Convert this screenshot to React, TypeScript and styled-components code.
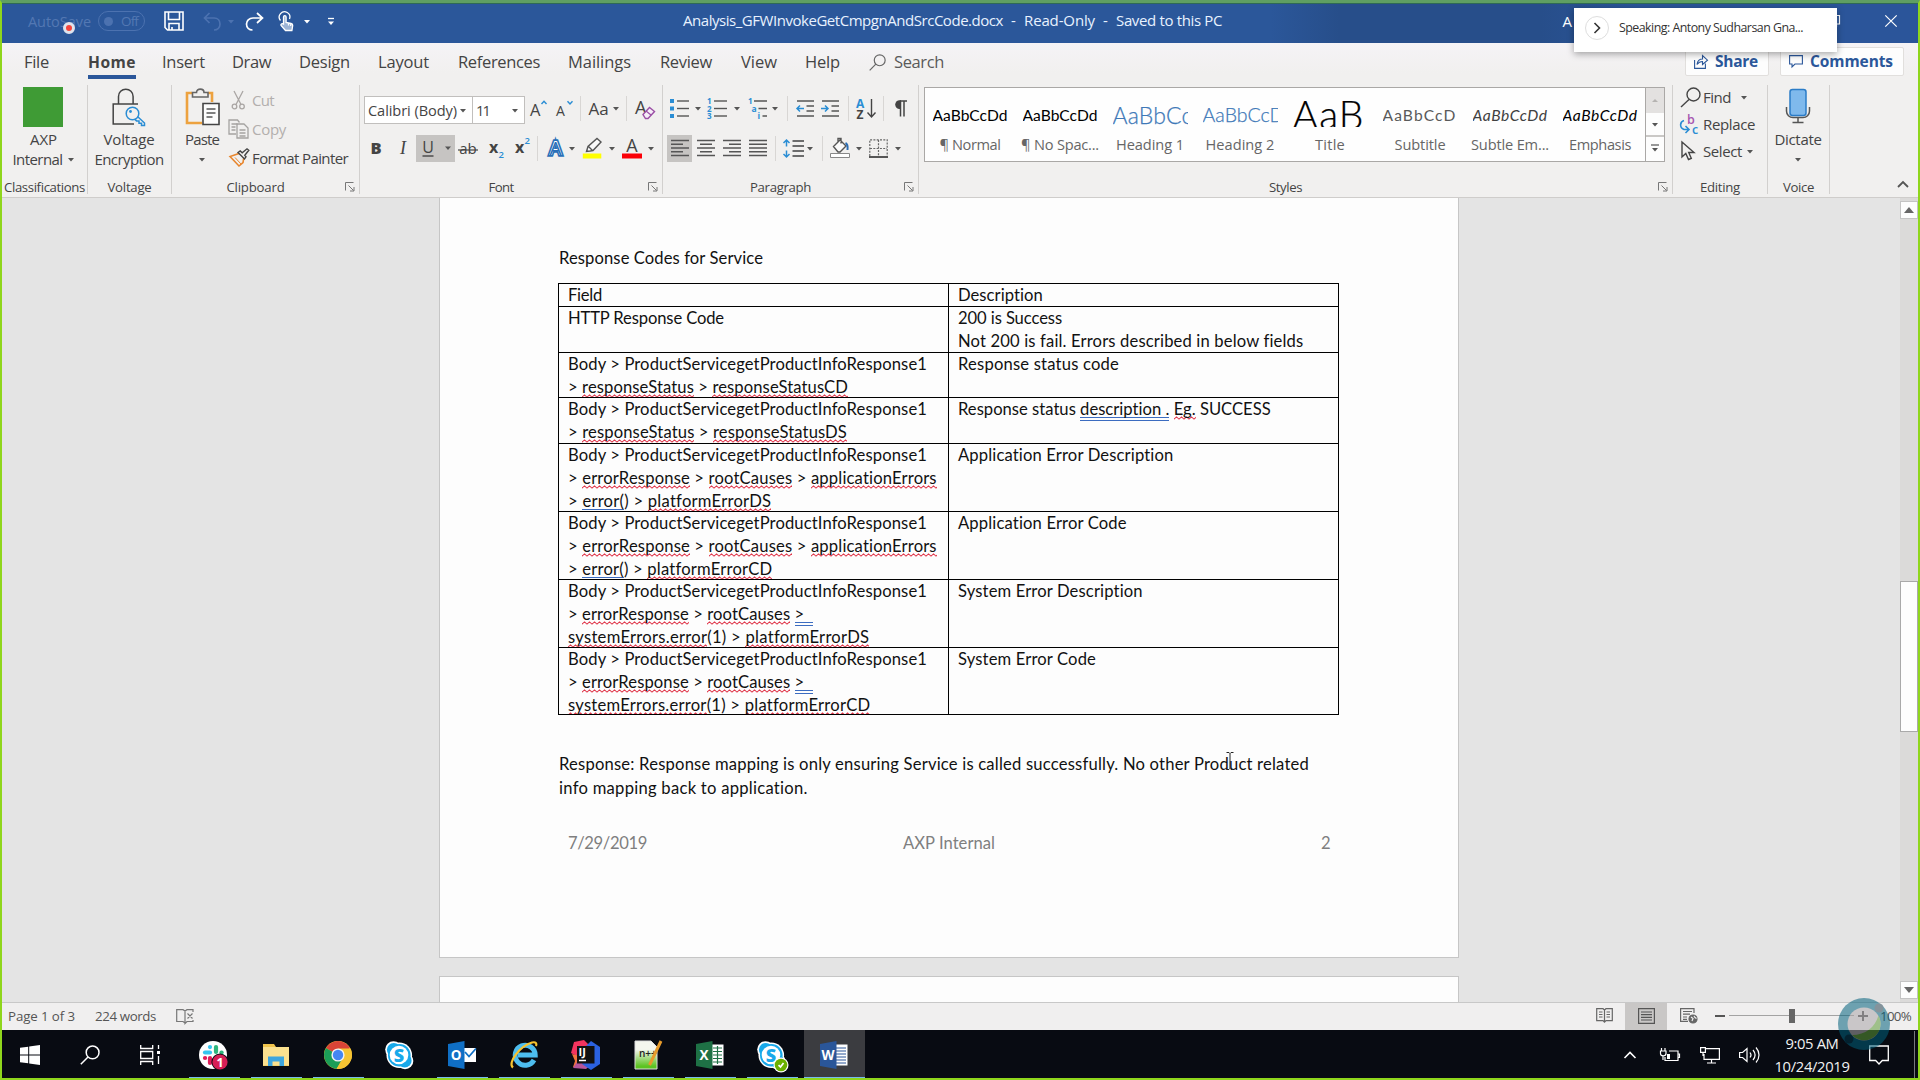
import React, { useLayoutEffect, useRef, useState } from "react";
import styled, { createGlobalStyle, css } from "styled-components";

const ui = `"Open Sans", "Noto Sans", "Liberation Sans", sans-serif`;
const doc = `Lato, "Open Sans", "Liberation Sans", sans-serif`;

const Global = createGlobalStyle`
  * { box-sizing: border-box; }
  html, body { margin: 0; padding: 0; background: #e4e4e4; overflow: hidden; }
  svg { display: block; flex: none; overflow: visible; }
`;

/* ---------- text that is tracked to a given width ---------- */
const FitSpan = styled.span`
  display: inline-block;
  flex: none;
  white-space: pre;
`;

function Fit({ w, children }: { w: number; children: React.ReactNode }) {
  const ref = useRef<HTMLSpanElement>(null);
  const [spacing, setSpacing] = useState<number | null>(null);
  useLayoutEffect(() => {
    const el = ref.current;
    if (!el || spacing !== null) return;
    const n = (el.textContent || "").length;
    if (n) setSpacing((w - el.getBoundingClientRect().width) / n);
  }, [w, spacing]);
  return (
    <FitSpan ref={ref} style={{ letterSpacing: spacing === null ? undefined : `${spacing}px` }}>
      {children}
    </FitSpan>
  );
}

/* ---------- shell ---------- */
const Screen = styled.div`
  position: relative;
  display: flex;
  flex-direction: column;
  width: 1920px;
  height: 1080px;
  padding-top: 4px;
  overflow: hidden;
  background: #e4e4e4;
  font-family: ${ui};
  color: #444;
`;

const Frame = styled.div`
  position: absolute;
  inset: 0;
  pointer-events: none;
  border: 2px solid #8fd61c;
  border-top: 3px solid #5f9f62;
  box-shadow: inset 0 1px 0 #2f6a55;
`;

/* ---------- title bar ---------- */
const TitleBar = styled.div`
  flex: none;
  display: flex;
  align-items: center;
  height: 39px;
  padding: 0 23px 5px 28px;
  background: linear-gradient(90deg, #2b579a 0 1270px, #274e8a 1340px 1540px, #2b559a 1640px);
  color: #fff;
  font-size: 15px;
`;

const Faint = styled.div`
  display: flex;
  align-items: center;
  color: #5378b3;
  font-size: 14.5px;
`;

const Toggle = styled.div`
  display: flex;
  align-items: center;
  width: 47px;
  height: 20px;
  margin-left: 7px;
  padding: 0 6px 0 5px;
  justify-content: space-between;
  border: 1px solid #4c72b0;
  border-radius: 10px;
  font-size: 13.5px;
`;
const Knob = styled.div`
  width: 9px;
  height: 9px;
  border-radius: 50%;
  background: #4c72b0;
`;

const Slot = styled.div<{ $w?: number; $ml?: number; $on?: boolean; $drop?: number }>`
  flex: none;
  display: flex;
  align-items: center;
  justify-content: center;
  width: ${(p) => (p.$w ? `${p.$w}px` : "auto")};
  height: 27px;
  margin-left: ${(p) => p.$ml || 0}px;
  margin-top: ${(p) => p.$drop || 0}px;
  ${(p) => p.$on && css`background: #c6c4c2;`}
`;

const DocTitle = styled.div`
  display: flex;
  width: 887px;
  margin-left: 348px;
  padding-bottom: 3px;
  color: #e8f2ff;
`;
const Dash = styled.span`
  width: 21px;
  text-align: center;
`;

/* ---------- tabs ---------- */
const Tabs = styled.div`
  flex: none;
  display: flex;
  height: 42px;
  background: linear-gradient(#f5f3f6, #f1f0ef 30px);
  padding-left: 24px;
  font-size: 16.5px;
`;
const Tab = styled.div<{ $w: number; $active?: boolean }>`
  flex: none;
  width: ${(p) => p.$w}px;
  padding-top: 7px;
  line-height: 24px;
  ${(p) =>
    p.$active &&
    css`
      font-weight: 700;
      font-size: 15.6px;
    `}
`;
const Underline = styled.div`
  width: 48px;
  height: 4px;
  margin-top: 1px;
  background: #2b579a;
`;
const SearchBox = styled.div`
  display: flex;
  width: 816px;
  padding-top: 7px;
  line-height: 24px;
  gap: 8px;
  color: #5a5a5a;
  svg { margin-top: 4px; }
`;
const PillButton = styled.div<{ $w: number; $mr?: number }>`
  flex: none;
  display: flex;
  align-items: center;
  gap: 7px;
  width: ${(p) => p.$w}px;
  height: 29px;
  margin: 4px ${(p) => p.$mr || 0}px 0 0;
  padding: 0 0 1px 8px;
  background: #fdfdfd;
  border: 1px solid #e1dfdd;
  border-radius: 2px;
  color: #2b579a;
  font-weight: 700;
  font-size: 15.5px;
`;

/* ---------- ribbon ---------- */
const Ribbon = styled.div`
  flex: none;
  display: flex;
  height: 113px;
  padding-left: 2px;
  background: #f1f0ef;
  border-bottom: 1px solid #cfcdcb;
`;
const Group = styled.div<{ $w: number }>`
  flex: none;
  display: flex;
  flex-direction: column;
  width: ${(p) => p.$w}px;
  height: 109px;
  border-right: 1px solid #d2d0ce;
`;
const GroupBody = styled.div<{ $pt?: number }>`
  flex: 1;
  display: flex;
  padding-top: ${(p) => p.$pt || 0}px;
`;
const GroupFoot = styled.div`
  flex: none;
  display: flex;
  align-items: center;
  height: 20px;
  margin-bottom: -3px;
  font-size: 13.2px;
`;
const FootLabel = styled.div`
  flex: 1;
  display: flex;
  justify-content: center;
`;
const LauncherBox = styled.div`
  width: 20px;
  padding-left: 6px;
`;
const Rows = styled.div<{ $gap?: number; $up?: number }>`
  display: flex;
  flex-direction: column;
  gap: ${(p) => p.$gap ?? 13}px;
  margin-top: ${(p) => -(p.$up || 0)}px;
`;
const Row = styled.div<{ $h?: number }>`
  display: flex;
  align-items: center;
  height: ${(p) => p.$h || 25}px;
`;
const BigButton = styled.div<{ $w: number; $pt?: number; $ml?: number }>`
  flex: none;
  display: flex;
  flex-direction: column;
  align-items: center;
  width: ${(p) => p.$w}px;
  margin-left: ${(p) => p.$ml || 0}px;
  padding-top: ${(p) => p.$pt ?? 2}px;
  font-size: 15px;
  line-height: 20px;
`;
const BigIcon = styled.div`
  display: flex;
  justify-content: center;
  height: 42px;
`;
const CaretLine = styled.div`
  display: flex;
  align-items: center;
  gap: 4px;
  height: 20px;
`;
const GreenSquare = styled.div`
  width: 40px;
  height: 40px;
  margin-right: 1px;
  background: #3f9b35;
`;
const SmallItem = styled.div<{ $off?: boolean; $h: number }>`
  display: flex;
  align-items: center;
  height: ${(p) => p.$h}px;
  font-size: 15px;
  color: ${(p) => (p.$off ? "#b3afad" : "#444")};
`;
const IconCell = styled.div<{ $w: number }>`
  flex: none;
  width: ${(p) => p.$w}px;
  display: flex;
`;
const Sep = styled.div<{ $ml?: number }>`
  flex: none;
  width: 1px;
  height: 25px;
  margin-left: ${(p) => p.$ml || 0}px;
  background: #d8d6d4;
`;
const Combo = styled.div<{ $w: number }>`
  flex: none;
  display: flex;
  align-items: center;
  justify-content: space-between;
  width: ${(p) => p.$w}px;
  height: 28px;
  margin-right: -1px;
  padding: 0 5px 0 3px;
  background: #fff;
  border: 1px solid #c1bfbd;
  font-size: 14.6px;
  & + & { margin-right: 1px; }
`;
const Glyph = styled.span<{ $size: number; $weight?: number; $italic?: boolean; $color?: string; $serif?: boolean }>`
  font-size: ${(p) => p.$size}px;
  font-weight: ${(p) => p.$weight || 400};
  font-style: ${(p) => (p.$italic ? "italic" : "normal")};
  font-family: ${(p) => (p.$serif ? `"Liberation Serif", serif` : ui)};
  color: ${(p) => p.$color || "#444"};
  line-height: 1;
`;

/* ---------- styles gallery ---------- */
const Gallery = styled.div`
  display: flex;
  width: 741px;
  height: 75px;
  margin: 2px 0 0 5px;
  background: #fefefe;
  border: 1px solid #aaa8a6;
`;
const StyleCell = styled.div`
  flex: none;
  width: 90px;
  display: flex;
  flex-direction: column;
  align-items: center;
  font-size: 14.6px;
  color: #666;
`;
const Sample = styled.div<{ $size: number; $color?: string; $italic?: boolean; $light?: boolean }>`
  display: flex;
  align-items: flex-end;
  width: 75px;
  height: 30px;
  margin-top: 9px;
  overflow: hidden;
  white-space: pre;
  font-family: ${doc};
  font-size: ${(p) => p.$size}px;
  line-height: 20px;
  padding-bottom: ${(p) => (p.$size > 30 ? 3 : 2)}px;
  color: ${(p) => p.$color || "#000"};
  font-style: ${(p) => (p.$italic ? "italic" : "normal")};
  font-weight: ${(p) => (p.$light ? 300 : 400)};
  -webkit-text-stroke: ${(p) => (p.$light ? `0.25px ${p.$color || "#000"}` : "0")};
`;
const StyleName = styled.div`
  line-height: 22px;
  margin-top: 6px;
`;
const GalleryScroll = styled.div`
  display: flex;
  flex-direction: column;
  width: 19px;
  border-left: 1px solid #aaa8a6;
`;
const GalleryBtn = styled.div<{ $h: number; $off?: boolean }>`
  display: flex;
  align-items: center;
  justify-content: center;
  height: ${(p) => p.$h}px;
  background: ${(p) => (p.$off ? "#e3e1e0" : "#fdfdfd")};
  border-bottom: ${(p) => (p.$h === 24 ? "2px solid #cac8c6" : "none")};
`;
const Collapse = styled.div`
  flex: 1;
  display: flex;
  align-items: flex-end;
  justify-content: flex-end;
  padding: 0 11px 7px 0;
`;

/* ---------- document ---------- */
const Workspace = styled.div`
  flex: none;
  display: flex;
  height: 804px;
  padding-left: 439px;
  background: #e4e4e4;
`;
const Pages = styled.div`
  width: 1020px;
  display: flex;
  flex-direction: column;
  gap: 18px;
`;
const Page = styled.div<{ $h: number; $first?: boolean }>`
  flex: none;
  height: ${(p) => p.$h}px;
  padding: 48px 0 0 119px;
  background: #fdfdfd;
  border: 1px solid #c6c6c6;
  ${(p) => p.$first && css`border-top: none;`}
  font-family: ${doc};
  font-size: 16.6px;
  color: #111;
`;
const Para = styled.div<{ $h: number }>`
  height: ${(p) => p.$h}px;
  line-height: ${(p) => p.$h}px;
`;
const Table = styled.div`
  display: flex;
  flex-direction: column;
  width: 781px;
  margin: 13px 0 0 -1px;
  border: 1px solid #000;
  border-bottom: none;
`;
const TRow = styled.div<{ $h: number }>`
  display: grid;
  grid-template-columns: 389px 1fr;
  height: ${(p) => p.$h}px;
  border-bottom: 1px solid #000;
`;
const Cell = styled.div`
  padding-left: 9px;
  line-height: 22.8px;
  overflow: hidden;
  & + & { border-left: 1px solid #000; }
`;
const Line = styled.div`
  height: 22.8px;
`;
const Squiggle = styled.span`
  background: url("data:image/svg+xml,%3Csvg xmlns='http://www.w3.org/2000/svg' width='5' height='4'%3E%3Cpath d='M-1.250 .9L0 3.1L2.500 .9L5 3.1L6.250 2' fill='none' stroke='%23e0364a' stroke-width='1.050'/%3E%3C/svg%3E")
    repeat-x left bottom;
  padding-bottom: 1px;
`;
const Grammar = styled.span`
  background: linear-gradient(#3c6cc0 0 1px, transparent 1px 3px, #3c6cc0 3px 4px) no-repeat left bottom / 100% 4px;
  padding-bottom: 2px;
`;
const Footer = styled.div`
  display: grid;
  grid-template-columns: 335px 1fr auto;
  width: 762px;
  margin: 31px 0 0 9px;
  height: 24px;
  line-height: 24px;
  color: #7f7f7f;
`;
const Scrollbar = styled.div`
  display: flex;
  flex-direction: column;
  width: 18px;
  margin-left: 441px;
  padding: 3px 0 3px;
  background: #dbdad9;
`;
const ScrollBtn = styled.div`
  flex: none;
  display: flex;
  align-items: center;
  justify-content: center;
  height: 18px;
  background: #fdfdfd;
  border: 1px solid #c4c4c4;
`;
const ScrollTrack = styled.div`
  flex: 1;
  padding-top: 362px;
`;
const ScrollThumb = styled.div`
  height: 151px;
  background: #fdfdfd;
  border: 1px solid #a9a9a9;
`;
const TextCursor = styled.div`
  position: absolute;
  left: 1225px;
  top: 752px;
`;

/* ---------- status bar ---------- */
const StatusBar = styled.div`
  flex: none;
  display: flex;
  align-items: center;
  height: 28px;
  padding: 0 0 1px 8px;
  background: #f0efef;
  border-top: 1px solid #c8c8c8;
  font-size: 13.3px;
  color: #555;
`;
const View = styled.div<{ $w: number; $ml?: number; $on?: boolean }>`
  flex: none;
  display: flex;
  align-items: center;
  justify-content: center;
  width: ${(p) => p.$w}px;
  height: 27px;
  margin-left: ${(p) => p.$ml || 0}px;
  padding-bottom: 1px;
  box-shadow: ${(p) => (p.$on ? "0 1px 0 #c9c7c6" : "none")};
  background: ${(p) => (p.$on ? "#c9c7c6" : "transparent")};
`;
const Zoom = styled.div`
  display: flex;
  align-items: center;
  width: 125px;
  height: 14px;
  margin: 0 4px;
  padding-left: 60px;
  background: linear-gradient(#a3a3a3, #a3a3a3) no-repeat 0 6px / 100% 1px;
`;
const ZoomThumb = styled.div`
  width: 6px;
  height: 14px;
  background: #666;
`;

/* ---------- taskbar ---------- */
const Taskbar = styled.div`
  flex: none;
  display: flex;
  height: 50px;
  background: #080b12;
  color: #f2f2f2;
`;
const SysTile = styled.div`
  flex: none;
  display: flex;
  align-items: center;
  justify-content: center;
  width: 60px;
  height: 50px;
`;
const AppTiles = styled.div`
  display: flex;
  margin-left: 4px;
  width: 1436px;
`;
const AppTile = styled.div<{ $run?: boolean; $active?: boolean }>`
  flex: none;
  display: flex;
  align-items: center;
  justify-content: center;
  width: 61px;
  height: 48px;
  margin-right: 1px;
  padding: 2px 2px 0 0;
  background: ${(p) => (p.$active ? "#3b3c40" : "transparent")};
  ${(p) =>
    p.$run &&
    css`
      background-image: linear-gradient(#76b9ed, #76b9ed);
      background-repeat: no-repeat;
      background-position: center bottom;
      background-size: ${p.$active ? "61px" : "51px"} 1px;
    `}
`;
const Tray = styled.div`
  display: flex;
  align-items: center;
  height: 50px;
`;
const Clock = styled.div`
  display: flex;
  flex-direction: column;
  align-items: center;
  width: 76px;
  margin: 0 19px 0 14px;
  font-size: 14.8px;
  line-height: 23px;
`;
const DesktopEdge = styled.div`
  width: 1px;
  height: 48px;
  margin-left: 25px;
  background: #77797d;
`;

/* ---------- overlays ---------- */
const SpeakerCard = styled.div`
  position: absolute;
  left: 1574px;
  top: 8px;
  display: flex;
  align-items: center;
  gap: 10px;
  width: 263px;
  height: 44px;
  padding: 0 0 5px 11px;
  background: #fff;
  box-shadow: 0 2px 7px rgba(0, 0, 0, 0.35);
  color: #333;
  font-size: 12.4px;
  font-weight: 500;
`;
const RoundBtn = styled.div`
  display: flex;
  align-items: center;
  justify-content: center;
  width: 24px;
  height: 24px;
  border: 1px solid #dedede;
  border-radius: 50%;
`;
const RecordDot = styled.div`
  position: absolute;
  left: 63px;
  top: 22px;
  width: 12px;
  height: 12px;
  border: 3px solid #dfe3ec;
  border-radius: 50%;
  background: #f4443c;
`;
const Ball = styled.div`
  position: absolute;
  left: 1838px;
  top: 998px;
`;

/* ---------- icons ---------- */
const Caret = ({ c = "#555", s = 6 }: { c?: string; s?: number }) => (
  <svg width={8} height={5} viewBox="0 0 8 5">
    <path d={`M${4 - s / 2} 1h${s}l${-s / 2} 3.4z`} fill={c} />
  </svg>
);
const Launcher = () => (
  <LauncherBox>
    <svg width="10" height="10" viewBox="0 0 10 10" fill="none" stroke="#777">
      <path d="M.5 8.5v-8h8M3.5 3.5l5 5M9 5v4H5" />
    </svg>
  </LauncherBox>
);
const Foot = ({ w, label, launch }: { w: number; label: string; launch?: boolean }) => (
  <GroupFoot>
    <FootLabel>
      <Fit w={w}>{label}</Fit>
    </FootLabel>
    {launch && <Launcher />}
  </GroupFoot>
);
const lines = (rows: [number, number][], c = "#555") =>
  rows.map(([a, b], i) => <path key={i} d={`M${a} ${1 + i * 5}H${b}`} stroke={c} strokeWidth="1.7" />);

const AlignIcon = ({ rows }: { rows: [number, number][] }) => (
  <svg width="18" height="18" viewBox="0 0 18 18">
    {rows.map(([a, b], i) => (
      <path key={i} d={`M${a} ${1.5 + i * 3.75}H${b}`} stroke="#555" strokeWidth="1.5" />
    ))}
  </svg>
);
const SvgText = styled.text`
  font-family: ${ui};
`;
const Magnifier = ({ s = 19, c = "#555", w = 1.4 }: { s?: number; c?: string; w?: number }) => (
  <svg width={s} height={s} viewBox="0 0 20 20" fill="none" stroke={c} strokeWidth={w}>
    <circle cx="12.6" cy="7.4" r="6.4" />
    <path d="M8 12L.8 19.2" />
  </svg>
);
const OfficeIcon = ({ letter, dark, kind }: { letter: string; dark: string; kind: "mail" | "grid" | "lines" }) => (
  <svg width="28" height="28" viewBox="0 0 28 28">
    {kind !== "mail" && <rect x="14" y="3.5" width="13.500" height="21" fill="#fff" />}
    {kind === "mail" && (
      <>
        <rect x="16" y="7" width="12" height="14" fill="#fff" />
        <path d="M17 11l4 4.500 7-8" fill="none" stroke={dark} strokeWidth="1.8" />
      </>
    )}
    {kind === "grid" && (
      <path d="M17 7h9M17 10.500h9M17 14h9M17 17.500h9M17 21h9M21.500 5v18" stroke={dark} strokeWidth="1.2" />
    )}
    {kind === "lines" && (
      <path d="M16 7h10M16 10h10M16 13h10M16 16h10M16 19h10M16 22h10" stroke={dark} strokeWidth="1.200" />
    )}
    <path d="M0 3L16.500 0v28L0 25z" fill={dark} />
    <SvgText x="8" y="19" fontSize="13.500" fontWeight="700" fill="#fff" textAnchor="middle">
      {letter}
    </SvgText>
  </svg>
);
const SkypeIcon = ({ badge }: { badge?: boolean }) => (
  <svg width="29" height="29" viewBox="0 0 29 29">
    <circle cx="8.500" cy="8.500" r="8.300" fill="#fff" />
    <circle cx="20" cy="20" r="8.300" fill="#fff" />
    <circle cx="14.300" cy="14.300" r="12.800" fill="#fff" />
    <circle cx="8.800" cy="8.800" r="6.900" fill="#18a9ea" />
    <circle cx="19.700" cy="19.700" r="6.900" fill="#18a9ea" />
    <circle cx="14.300" cy="14.300" r="11.300" fill="#18a9ea" />
    <circle cx="14" cy="14" r="9.300" fill="#fff" />
    <SvgText x="14" y="20.500" fontSize="18" fontWeight="800" fill="#18a9ea" textAnchor="middle">
      S
    </SvgText>
    {badge && (
      <>
        <circle cx="24" cy="24" r="7.500" fill="#fff" />
        <circle cx="24" cy="24" r="6.300" fill="#6bb100" />
        <path d="M21.500 24.200l2 1.800 3-4" fill="none" stroke="#fff" strokeWidth="1.700" />
      </>
    )}
  </svg>
);

/* ---------- document content ---------- */
const S = Squiggle;
const G = Grammar;
const bodyLine: [number, React.ReactNode] = [359, "Body > ProductServicegetProductInfoResponse1"];
const appErrors: [number, React.ReactNode] = [
  369,
  <>{"> "}<S>errorResponse</S>{" > "}<S>rootCauses</S>{" > "}<S>applicationErrors</S></>,
];
const sysErrors: [number, React.ReactNode] = [
  245,
  <>{"> "}<S>errorResponse</S>{" > "}<S>rootCauses</S> <G>{">  "}</G></>,
];
type Lines = [number, React.ReactNode][];
const tableRows: { h: number; left: Lines; right: Lines }[] = [
  { h: 23, left: [[34, "Field"]], right: [[85, "Description"]] },
  {
    h: 46,
    left: [[156, "HTTP Response Code"]],
    right: [[104, "200 is Success"], [345, "Not 200 is fail. Errors described in below fields"]],
  },
  {
    h: 45,
    left: [bodyLine, [280, <>{"> "}<S>responseStatus</S>{" > "}<S>responseStatusCD</S></>]],
    right: [[161, "Response status code"]],
  },
  {
    h: 46,
    left: [bodyLine, [279, <>{"> "}<S>responseStatus</S>{" > "}<S>responseStatusDS</S></>]],
    right: [[313, <>Response status <G>description .</G> <S>Eg.</S> SUCCESS</>]],
  },
  {
    h: 68,
    left: [bodyLine, appErrors, [203, <>{"> "}<G>error(</G>{") > "}<S>platformErrorDS</S></>]],
    right: [[216, "Application Error Description"]],
  },
  {
    h: 68,
    left: [bodyLine, appErrors, [204, <>{"> "}<G>error(</G>{") > "}<S>platformErrorCD</S></>]],
    right: [[169, "Application Error Code"]],
  },
  {
    h: 68,
    left: [bodyLine, sysErrors, [301, <><S>systemErrors.error</S>{"(1) > "}<S>platformErrorDS</S></>]],
    right: [[185, "System Error Description"]],
  },
  {
    h: 67,
    left: [bodyLine, sysErrors, [302, <><S>systemErrors.error</S>{"(1) > "}<S>platformErrorCD</S></>]],
    right: [[138, "System Error Code"]],
  },
];

const tabs: [string, number, number][] = [
  ["File", 64, 25],
  ["Home", 74, 48],
  ["Insert", 70, 43],
  ["Draw", 67, 39],
  ["Design", 79, 51],
  ["Layout", 80, 51],
  ["References", 110, 82],
  ["Mailings", 92, 63],
  ["Review", 81, 52],
  ["View", 64, 36],
  ["Help", 64, 35],
];

const styleItems = [
  { s: "AaBbCcDd", w: 75, size: 15.6, name: "¶ Normal", nw: 61 },
  { s: "AaBbCcDd", w: 75, size: 15.6, name: "¶ No Spac...", nw: 78 },
  { s: "AaBbCc", w: 80, size: 23, name: "Heading 1", nw: 68, color: "#3f79b8", light: true },
  { s: "AaBbCcD", w: 82, size: 19.5, name: "Heading 2", nw: 69, color: "#3f79b8", light: true },
  { s: "AaB", w: 72, size: 39, name: "Title", nw: 30, light: true },
  { s: "AaBbCcD", w: 74, size: 15.6, name: "Subtitle", nw: 51, color: "#5a5a5a" },
  { s: "AaBbCcDd", w: 75, size: 15.6, name: "Subtle Em...", nw: 78, color: "#404040", italic: true },
  { s: "AaBbCcDd", w: 75, size: 15.6, name: "Emphasis", nw: 62, italic: true },
];

export default function App() {
  return (
    <Screen>
      <Global />
      <TitleBar>
        <Faint>
          <Fit w={63}>AutoSave</Fit>
          <Toggle>
            <Knob />
            <Fit w={17}>Off</Fit>
          </Toggle>
        </Faint>
        <Slot $w={20} $ml={19}>
          <svg width="20" height="20" viewBox="0 0 20 20" fill="none" stroke="#fff" strokeWidth="1.6">
            <path d="M1 1h18v18H3.500L1 16.500zM4.500 1v7.500h11V1M5 19v-6.500h10V19M8 19v-3" />
          </svg>
        </Slot>
        <Slot $w={18} $ml={19}>
          <svg width="18" height="19" viewBox="0 0 18 19" fill="none" stroke="#4c72b0" strokeWidth="1.7">
            <path d="M6.500 1L1.500 6l5 5M1.500 6H11c4 0 6 3 6 6 0 3.500-2.500 6-6 6" />
          </svg>
        </Slot>
        <Slot $w={8} $ml={6}><Caret c="#4c72b0" /></Slot>
        <Slot $w={19} $ml={10}>
          <svg width="19" height="19" viewBox="0 0 19 19" fill="none" stroke="#fff" strokeWidth="1.7">
            <path d="M12 1l5.500 5-5.500 5M17.500 6H8C4 6 1.500 9 1.500 12c0 3.500 2.500 6 6 6" />
          </svg>
        </Slot>
        <Slot $w={16} $ml={14}>
          <svg width="16" height="21" viewBox="0 0 16 21" fill="none" stroke="#fff" strokeWidth="1.3">
            <path d="M2.500 9.500A5.300 5.300 0 1 1 11.500 8" />
            <path d="M5.500 13V6c0-1.800 2.600-1.800 2.600 0v5.500l5 1c1.200.3 1.700 1 1.600 2l-.8 5H7.500L3 14.500c-.6-1.400 1.300-2.300 2.500-1.500zM10.500 12v2.500M12.700 12.500V15" fill="#9db4d6" />
          </svg>
        </Slot>
        <Slot $w={8} $ml={9}><Caret c="#fff" /></Slot>
        <Slot $w={8} $ml={16}>
          <svg width="8" height="9" viewBox="0 0 8 9">
            <path d="M1 1.500h6" stroke="#fff" strokeWidth="1.300" />
            <path d="M1 4.500h6L4 8z" fill="#fff" />
          </svg>
        </Slot>
        <DocTitle>
          <Fit w={320}>Analysis_GFWInvokeGetCmpgnAndSrcCode.docx</Fit>
          <Dash>-</Dash>
          <Fit w={71}>Read-Only</Fit>
          <Dash>-</Dash>
          <Fit w={106}>Saved to this PC</Fit>
        </DocTitle>
        <Slot>A</Slot>
        <Slot $w={12} $ml={256}>
          <svg width="12" height="12" viewBox="0 0 12 12" fill="none" stroke="#fff" strokeWidth="1.2">
            <path d="M.5 3h8v8.500h-8zM3 3V.5h8.500V9H8.500" />
          </svg>
        </Slot>
        <Slot $w={12} $ml={45}>
          <svg width="12" height="12" viewBox="0 0 12 12" stroke="#fff" strokeWidth="1.2">
            <path d="M.3.3l11.400 11.400M11.700.3L.3 11.700" />
          </svg>
        </Slot>
      </TitleBar>

      <Tabs>
        {tabs.map(([t, w, tw]) => (
          <Tab key={t} $w={w} $active={t === "Home"}>
            <Fit w={tw}>{t}</Fit>
            {t === "Home" && <Underline />}
          </Tab>
        ))}
        <SearchBox>
          <Magnifier s={17} c="#666" />
          <Fit w={50}>Search</Fit>
        </SearchBox>
        <PillButton $w={84} $mr={11}>
          <svg width="14" height="15" viewBox="0 0 14 15" fill="none" stroke="#2b579a" strokeWidth="1.1">
            <path d="M.6 6v8.400h10.800V9.500M3 10.500c.5-3.500 2.500-5.500 5.500-5.500V1.500l5 4.700-5 4.300V7.500C6 7.500 4.500 8.500 3 10.500z" />
          </svg>
          <Fit w={43}>Share</Fit>
        </PillButton>
        <PillButton $w={124}>
          <svg width="14" height="13" viewBox="0 0 14 13" fill="none" stroke="#2b579a" strokeWidth="1.1">
            <path d="M.6.600h12.800v8.400H6l-3 3V9H.600z" />
          </svg>
          <Fit w={83}>Comments</Fit>
        </PillButton>
      </Tabs>

      <Ribbon>
        <Group $w={86}>
          <GroupBody>
            <BigButton $w={83}>
              <BigIcon><GreenSquare /></BigIcon>
              <Fit w={27}>AXP</Fit>
              <CaretLine>
                <Fit w={50}>Internal</Fit>
                <Caret />
              </CaretLine>
            </BigButton>
          </GroupBody>
          <Foot w={81} label="Classifications" />
        </Group>

        <Group $w={84}>
          <GroupBody>
            <BigButton $w={82}>
              <BigIcon>
                <svg width="34" height="40" viewBox="0 0 34 40" fill="none" strokeWidth="1.500">
                  <path d="M26 17H1.200v20H22M6.500 17V9.500a7.300 7.300 0 0 1 14.600 0V17" stroke="#444" />
                  <circle cx="20.500" cy="26.500" r="6.300" stroke="#2a8dd4" fill="#f1f0ef" />
                  <circle cx="18.500" cy="24.500" r="1.400" fill="#2a8dd4" />
                  <path d="M25.500 29.500l7 6.500v2.500h-3v-2.300h-2.500v-2.300h-2.500l-2-2" stroke="#2a8dd4" />
                </svg>
              </BigIcon>
              <Fit w={51}>Voltage</Fit>
              <Fit w={69}>Encryption</Fit>
            </BigButton>
          </GroupBody>
          <Foot w={44} label="Voltage" />
        </Group>

        <Group $w={188}>
          <GroupBody>
            <BigButton $w={36} $ml={12}>
              <BigIcon>
                <svg width="36" height="40" viewBox="0 0 36 40" fill="none">
                  <path d="M8 6H3v30h15M24 6h4v9" stroke="#eda23f" strokeWidth="2.600" />
                  <path d="M8.500 10V5.500h4C12.500 1 20 1 20 5.500h4V10z" stroke="#666" strokeWidth="1.600" fill="#f1f0ef" />
                  <path d="M19 16.500h16v21H19z" stroke="#444" strokeWidth="1.600" fill="#fcfcfc" />
                  <path d="M22.500 22h9M22.500 26h9M22.500 30h6" stroke="#555" strokeWidth="1.300" />
                </svg>
              </BigIcon>
              <Fit w={34}>Paste</Fit>
              <CaretLine><Caret /></CaretLine>
            </BigButton>
            <Rows $gap={0} $up={1}>
              <SmallItem $h={31} $off>
                <IconCell $w={32}>
                  <svg width="29" height="20" viewBox="0 0 29 20" fill="none" stroke="#aaa6a4" strokeWidth="1.300">
                    <g transform="translate(11 0)">
                      <path d="M3 1l7 13.500M12 1L5 14.500" />
                      <circle cx="3.500" cy="16.500" r="2.300" />
                      <circle cx="11" cy="16.500" r="2.300" />
                    </g>
                  </svg>
                </IconCell>
                <Fit w={22}>Cut</Fit>
              </SmallItem>
              <SmallItem $h={28} $off>
                <IconCell $w={32}>
                  <svg width="30" height="20" viewBox="0 0 30 20" fill="none" stroke="#a5a3a1" strokeWidth="1.300">
                    <g transform="translate(8 0)">
                      <path d="M8 15H1V1h8.500l2 2.500M3.500 5h6M3.500 8h4M3.500 11h4" />
                      <path d="M9 5h7l4 4v10H9zM11.500 11h6M11.500 14h6M11.500 17h6" />
                    </g>
                  </svg>
                </IconCell>
                <Fit w={34}>Copy</Fit>
              </SmallItem>
              <SmallItem $h={29}>
                <IconCell $w={32}>
                  <svg width="30" height="20" viewBox="0 0 30 20" fill="none">
                    <g transform="translate(9 0)">
                      <path d="M1 8.500l9 9.500 4-3.500 1-6.500-3.500-3z" stroke="#e8862e" strokeWidth="1.600" />
                      <path d="M6 9.500l6 6.500" stroke="#e8862e" />
                      <path d="M9 4.500l6.500 6.500 1.500-2.200-1.200-1.500 4-5L18 .8l-4.800 4-2-1.800z" stroke="#444" strokeWidth="1.400" fill="#f1f0ef" />
                    </g>
                  </svg>
                </IconCell>
                <Fit w={96}>Format Painter</Fit>
              </SmallItem>
            </Rows>
          </GroupBody>
          <Foot w={58} label="Clipboard" launch />
        </Group>

        <Group $w={303}>
          <GroupBody $pt={11}>
            <Rows>
              <Row>
                <Slot $ml={4} $drop={3}>
                  <Combo $w={109}><Fit w={89}>Calibri (Body)</Fit><Caret /></Combo>
                  <Combo $w={53}><Fit w={13}>11</Fit><Caret /></Combo>
                </Slot>
                <Slot $w={18} $ml={4}>
                  <svg width="18" height="18" viewBox="0 0 18 18" fill="none">
                    <SvgText x="0" y="15.500" fontSize="16.500" fill="#444">A</SvgText>
                    <path d="M11.500 4L14 1.200 16.500 4" stroke="#2a8dd4" strokeWidth="1.400" />
                  </svg>
                </Slot>
                <Slot $w={18} $ml={8}>
                  <svg width="18" height="18" viewBox="0 0 18 18" fill="none">
                    <SvgText x="0" y="15.500" fontSize="14" fill="#444">A</SvgText>
                    <path d="M11.500 1.200L14 4l2.500-2.800" stroke="#2a8dd4" strokeWidth="1.400" />
                  </svg>
                </Slot>
                <Sep $ml={6} />
                <Slot $w={21} $ml={7}><Glyph $size={17}>Aa</Glyph></Slot>
                <Slot $w={8} $ml={3}><Caret /></Slot>
                <Sep $ml={6} />
                <Slot $w={22} $ml={7}>
                  <svg width="22" height="22" viewBox="0 0 22 22" fill="none">
                    <SvgText x="1" y="16" fontSize="18" fill="#444">A</SvgText>
                    <path d="M9 16.500l6.500-7 5 4-6.500 7h-2.500z" fill="#f6eef8" stroke="#9b4fa5" strokeWidth="1.400" />
                    <path d="M12 13l5 4" stroke="#9b4fa5" strokeWidth="1.300" />
                  </svg>
                </Slot>
              </Row>
              <Row $h={28}>
                <Slot $w={12} $ml={10}><Glyph $size={16.5} $weight={800}>B</Glyph></Slot>
                <Slot $w={14} $ml={14}><Glyph $size={18} $italic $serif>I</Glyph></Slot>
                <Slot $w={39} $ml={6} $on>
                  <svg width="30" height="20" viewBox="0 0 30 20">
                    <SvgText x="7" y="15" fontSize="16" fill="#444" textAnchor="middle">U</SvgText>
                    <path d="M1.500 18h11" stroke="#444" strokeWidth="1.400" />
                    <path d="M24 8.500h6l-3 3.400z" fill="#555" />
                  </svg>
                </Slot>
                <Slot $w={20} $ml={3}>
                  <svg width="20" height="20" viewBox="0 0 20 20">
                    <SvgText x="10" y="16" fontSize="15" fill="#444" textAnchor="middle">ab</SvgText>
                    <path d="M0 12h20" stroke="#444" strokeWidth="1.200" />
                  </svg>
                </Slot>
                <Slot $w={16} $ml={11}>
                  <svg width="16" height="20" viewBox="0 0 16 20">
                    <SvgText x="0" y="14.500" fontSize="16" fontWeight="700" fill="#444">x</SvgText>
                    <SvgText x="9.500" y="19.500" fontSize="9.500" fontWeight="600" fill="#2a8dd4">2</SvgText>
                  </svg>
                </Slot>
                <Slot $w={16} $ml={10}>
                  <svg width="16" height="20" viewBox="0 0 16 20">
                    <SvgText x="0" y="14.500" fontSize="16" fontWeight="700" fill="#444">x</SvgText>
                    <SvgText x="9.500" y="6" fontSize="9.500" fontWeight="600" fill="#2a8dd4">2</SvgText>
                  </svg>
                </Slot>
                <Sep $ml={6} />
                <Slot $w={17} $ml={9}>
                  <svg width="17" height="20" viewBox="0 0 17 20">
                    <SvgText x="8.500" y="16.500" fontSize="19" fontWeight="600" fill="#fff" stroke="#2a6fb8" strokeWidth="3.400" paintOrder="stroke" textAnchor="middle">A</SvgText>
                    <SvgText x="8.500" y="16.500" fontSize="19" fontWeight="400" fill="#2a6fb8" textAnchor="middle">A</SvgText>
                  </svg>
                </Slot>
                <Slot $w={8} $ml={4}><Caret /></Slot>
                <Slot $w={21} $ml={6}>
                  <svg width="21" height="22" viewBox="0 0 21 22" fill="none">
                    <path d="M4.500 14.500l1.500-5L15 1.500l4 3.500-8 8.500-3 .5zM6.500 9.500l4 4" fill="#fafafa" stroke="#555" strokeWidth="1.400" />
                    <path d="M.8 16.500h18.500v5H.8z" fill="#ffff00" />
                  </svg>
                </Slot>
                <Slot $w={8} $ml={5}><Caret /></Slot>
                <Slot $w={21} $ml={6}>
                  <svg width="21" height="22" viewBox="0 0 21 22">
                    <SvgText x="10" y="14.500" fontSize="18" fill="#444" textAnchor="middle">A</SvgText>
                    <path d="M0 16.500h20v5H0z" fill="#fb0007" />
                  </svg>
                </Slot>
                <Slot $w={8} $ml={4}><Caret /></Slot>
              </Row>
            </Rows>
          </GroupBody>
          <Foot w={25} label="Font" launch />
        </Group>

        <Group $w={256}>
          <GroupBody $pt={11}>
            <Rows>
              <Row>
                <Slot $w={20} $ml={7}>
                  <svg width="20" height="20" viewBox="0 0 20 20">
                    {[2, 9.5, 17].map((y) => (
                      <g key={y}>
                        <rect x="0" y={y - 2} width="4" height="4" fill="#2a8dd4" />
                        <path d={`M7 ${y}H19`} stroke="#555" strokeWidth="1.400" />
                      </g>
                    ))}
                  </svg>
                </Slot>
                <Slot $w={8} $ml={4}><Caret /></Slot>
                <Slot $w={20} $ml={5}>
                  <svg width="20" height="20" viewBox="0 0 20 20">
                    {[2, 9.5, 17].map((y, i) => (
                      <g key={y}>
                        <SvgText x="0" y={y + 3} fontSize="8" fontWeight="700" fill="#2a8dd4">{i + 1}</SvgText>
                        <path d={`M7 ${y}H20`} stroke="#555" strokeWidth="1.400" />
                      </g>
                    ))}
                  </svg>
                </Slot>
                <Slot $w={8} $ml={6}><Caret /></Slot>
                <Slot $w={20} $ml={7}>
                  <svg width="20" height="20" viewBox="0 0 20 20">
                    <SvgText x="0" y="5" fontSize="8" fontWeight="700" fill="#2a8dd4">1</SvgText>
                    <SvgText x="3.500" y="12.500" fontSize="8.500" fontWeight="700" fill="#2a8dd4">a</SvgText>
                    <SvgText x="9.500" y="20" fontSize="8.500" fontWeight="700" fill="#2a8dd4">i</SvgText>
                    <path d="M6 2h13M10.500 9.500H19M14.500 17H19" stroke="#555" strokeWidth="1.400" />
                  </svg>
                </Slot>
                <Slot $w={8} $ml={3}><Caret /></Slot>
                <Sep $ml={8} />
                <Slot $w={19} $ml={8}>
                  <svg width="19" height="17" viewBox="0 0 19 17" fill="none">
                    <path d="M1 1h17M10.500 6H18M10.500 11H18M1 16h17" stroke="#555" strokeWidth="1.400" />
                    <path d="M1 8.500h7M4 5.500l-3 3 3 3" stroke="#2a8dd4" strokeWidth="1.500" />
                  </svg>
                </Slot>
                <Slot $w={19} $ml={6}>
                  <svg width="19" height="17" viewBox="0 0 19 17" fill="none">
                    <path d="M1 1h17M10.500 6H18M10.500 11H18M1 16h17" stroke="#555" strokeWidth="1.400" />
                    <path d="M0 8.500h7M4 5.500l3 3-3 3" stroke="#2a8dd4" strokeWidth="1.500" />
                  </svg>
                </Slot>
                <Sep $ml={8} />
                <Slot $w={21} $ml={7}>
                  <svg width="21" height="21" viewBox="0 0 21 21" fill="none">
                    <SvgText x="0" y="9.500" fontSize="12" fontWeight="700" fill="#2a8dd4">A</SvgText>
                    <SvgText x=".5" y="20.500" fontSize="12" fontWeight="700" fill="#444">Z</SvgText>
                    <path d="M15.500 1v18M11.500 14.500l4 4.500 4-4.500" stroke="#444" strokeWidth="1.400" />
                  </svg>
                </Slot>
                <Sep $ml={6} />
                <Slot $w={14} $ml={10}>
                  <svg width="14" height="17" viewBox="0 0 14 17">
                    <path d="M6.500 16.500V1H13M10 1v15.500" fill="none" stroke="#444" strokeWidth="1.500" />
                    <path d="M7 .3H5.500a4.200 4.200 0 0 0 0 8.600H7z" fill="#444" />
                  </svg>
                </Slot>
              </Row>
              <Row $h={28}>
                <Slot $w={25} $ml={4} $on><AlignIcon rows={[[0, 18], [0, 12], [0, 18], [0, 12], [0, 18]]} /></Slot>
                <Slot $w={18} $ml={5}><AlignIcon rows={[[0, 18], [3, 15], [0, 18], [3, 15], [0, 18]]} /></Slot>
                <Slot $w={18} $ml={8}><AlignIcon rows={[[0, 18], [6, 18], [0, 18], [6, 18], [0, 18]]} /></Slot>
                <Slot $w={18} $ml={8}><AlignIcon rows={[[0, 18], [0, 18], [0, 18], [0, 18], [0, 18]]} /></Slot>
                <Sep $ml={8} />
                <Slot $w={21} $ml={7}>
                  <svg width="21" height="19" viewBox="0 0 21 19" fill="none">
                    <g transform="translate(0 1)">{lines([[9.5, 21], [9.5, 21], [9.5, 21], [9.5, 21]])}</g>
                    <path d="M3.500 1v6.500M.5 4l3-3 3 3M3.500 11.500V18M.5 15l3 3 3-3" stroke="#2a8dd4" strokeWidth="1.500" />
                  </svg>
                </Slot>
                <Slot $w={8} $ml={2}><Caret /></Slot>
                <Sep $ml={8} />
                <Slot $w={20} $ml={7}>
                  <svg width="20" height="20" viewBox="0 0 20 20" fill="none">
                    <path d="M3.500 8.500L10 2l6 6-6 6H8zM8 4V.5h3v5" fill="#fafafa" stroke="#555" strokeWidth="1.400" />
                    <path d="M15.500 5c2 1 2.500 3 2 7" stroke="#2a6db4" strokeWidth="2" />
                    <path d="M.5 15.500h19v4H.5z" fill="#fff" stroke="#888" />
                  </svg>
                </Slot>
                <Slot $w={8} $ml={5}><Caret /></Slot>
                <Slot $w={19} $ml={6}>
                  <svg width="19" height="19" viewBox="0 0 19 19" fill="none" stroke="#666" strokeWidth="1.200">
                    <path d="M.8 17V.8h17.400V17M9.500 1v16M1 9.500h17" strokeDasharray="2 1.300" />
                    <path d="M0 18h19" stroke="#444" strokeWidth="1.800" />
                  </svg>
                </Slot>
                <Slot $w={8} $ml={6}><Caret /></Slot>
              </Row>
            </Rows>
          </GroupBody>
          <Foot w={61} label="Paragraph" launch />
        </Group>

        <Group $w={754}>
          <GroupBody>
            <Gallery>
              {styleItems.map((it) => (
                <StyleCell key={it.name}>
                  <Sample $size={it.size} $color={it.color} $italic={it.italic} $light={it.light}>
                    <Fit w={it.w}>{it.s}</Fit>
                  </Sample>
                  <StyleName><Fit w={it.nw}>{it.name}</Fit></StyleName>
                </StyleCell>
              ))}
              <GalleryScroll>
                <GalleryBtn $h={25} $off>
                  <svg width="8" height="5" viewBox="0 0 8 5"><path d="M1 4h6L4 1z" fill="#b5b3b1" /></svg>
                </GalleryBtn>
                <GalleryBtn $h={24}><Caret /></GalleryBtn>
                <GalleryBtn $h={23}>
                  <svg width="10" height="9" viewBox="0 0 10 9">
                    <path d="M1 1h8" stroke="#555" strokeWidth="1.200" />
                    <path d="M2 4h6L5 7.500z" fill="#555" />
                  </svg>
                </GalleryBtn>
              </GalleryScroll>
            </Gallery>
          </GroupBody>
          <Foot w={33} label="Styles" launch />
        </Group>

        <Group $w={95}>
          <GroupBody>
            <Rows $gap={0} $up={1}>
              <SmallItem $h={26}>
                <IconCell $w={30}>
                  <svg width="28" height="20" viewBox="0 0 28 20" fill="none" stroke="#444" strokeWidth="1.400">
                    <circle cx="20.500" cy="7.500" r="6.500" />
                    <path d="M16 12.500L8 20" />
                  </svg>
                </IconCell>
                <Fit w={28}>Find</Fit>
                <Slot $w={8} $ml={9}><Caret /></Slot>
              </SmallItem>
              <SmallItem $h={28}>
                <IconCell $w={30}>
                  <svg width="28" height="20" viewBox="0 0 28 20" fill="none">
                    <SvgText x="14" y="9.500" fontSize="12.500" fontWeight="600" fill="#a656b0">b</SvgText>
                    <SvgText x="19" y="19.500" fontSize="12.500" fontWeight="600" fill="#2a8dd4">c</SvgText>
                    <path d="M11 6.500c-4 1-5 7 0 9h4.500M12.500 12l3.500 3.500-3.500 3.500" stroke="#2a8dd4" strokeWidth="1.600" />
                  </svg>
                </IconCell>
                <Fit w={52}>Replace</Fit>
              </SmallItem>
              <SmallItem $h={26}>
                <IconCell $w={30}>
                  <svg width="28" height="20" viewBox="0 0 28 20" fill="none" stroke="#444" strokeWidth="1.400">
                    <path d="M9 1v15l3.800-3.500 2.700 6 2.800-1.200-2.600-5.800h5.300z" />
                  </svg>
                </IconCell>
                <Fit w={39}>Select</Fit>
                <Slot $w={8} $ml={4}><Caret /></Slot>
              </SmallItem>
            </Rows>
          </GroupBody>
          <Foot w={40} label="Editing" />
        </Group>

        <Group $w={62}>
          <GroupBody>
            <BigButton $w={60}>
              <BigIcon>
                <svg width="26" height="40" viewBox="0 0 26 40" fill="none">
                  <path d="M1.500 20v4c0 4 3 6.500 6.500 6.500h10c3.500 0 6.500-2.500 6.500-6.500v-4M13 31v4.500M7.500 35.500h11" stroke="#555" strokeWidth="1.500" />
                  <rect x="5" y="2.500" width="16" height="26" rx="2.500" fill="#7fb9ec" stroke="#2b7cc7" strokeWidth="1.500" />
                </svg>
              </BigIcon>
              <Fit w={47}>Dictate</Fit>
              <CaretLine><Caret /></CaretLine>
            </BigButton>
          </GroupBody>
          <Foot w={31} label="Voice" />
        </Group>
        <Collapse>
          <svg width="12" height="22" viewBox="0 0 12 22" fill="none" stroke="#555" strokeWidth="1.800">
            <path d="M1 19l5-5 5 5" />
          </svg>
        </Collapse>
      </Ribbon>

      <Workspace>
        <Pages>
          <Page $h={760} $first>
            <Para $h={24}><Fit w={204}>Response Codes for Service</Fit></Para>
            <Table>
              {tableRows.map((r, i) => (
                <TRow key={i} $h={r.h}>
                  {[r.left, r.right].map((cell, j) => (
                    <Cell key={j}>
                      {cell.map(([w, t], k) => (
                        <Line key={k}><Fit w={w}>{t}</Fit></Line>
                      ))}
                    </Cell>
                  ))}
                </TRow>
              ))}
            </Table>
            <Para $h={37} />
            <Para $h={24}>
              <Fit w={750}>Response: Response mapping is only ensuring Service is called successfully. No other Product related</Fit>
            </Para>
            <Para $h={24}><Fit w={249}>info mapping back to application.</Fit></Para>
            <Footer>
              <div><Fit w={79}>7/29/2019</Fit></div>
              <div><Fit w={92}>AXP Internal</Fit></div>
              <div><Fit w={9}>2</Fit></div>
            </Footer>
          </Page>
          <Page $h={40} />
        </Pages>
        <Scrollbar>
          <ScrollBtn>
            <svg width="10" height="6" viewBox="0 0 10 6"><path d="M0 6h10L5 0z" fill="#666" /></svg>
          </ScrollBtn>
          <ScrollTrack><ScrollThumb /></ScrollTrack>
          <ScrollBtn>
            <svg width="10" height="6" viewBox="0 0 10 6"><path d="M0 0h10L5 6z" fill="#666" /></svg>
          </ScrollBtn>
        </Scrollbar>
      </Workspace>

      <StatusBar>
        <Fit w={67}>Page 1 of 3</Fit>
        <Slot $ml={20}><Fit w={61}>224 words</Fit></Slot>
        <Slot $w={18} $ml={20}>
          <svg width="18" height="15" viewBox="0 0 18 15" fill="none" stroke="#777" strokeWidth="1.200">
            <path d="M17 3V.7h-6L9 2 7 .7H.7v11.800H7l2 1.500M9 2v12.500l2-2h6V11M11.500 4.500l5 5M16.500 4.500l-5 5" />
          </svg>
        </Slot>
        <View $w={18} $ml={1401}>
          <svg width="17" height="15" viewBox="0 0 17 15" fill="none" stroke="#666" strokeWidth="1.200">
            <path d="M8.500 2v12.500M8.500 2L7 .7H.7v12H7l1.500 1.500 1.500-1.500h6.300V.7H10zM3 4h3.500M3 6.500h3.500M3 9h3.500M10.500 4H14M10.500 6.500H14M10.500 9H14" />
          </svg>
        </View>
        <View $w={42} $ml={12} $on>
          <svg width="17" height="16" viewBox="0 0 17 16" fill="none" stroke="#555" strokeWidth="1.200">
            <path d="M.6.600h15.800v14.800H.600zM3 4h11M3 6.700h11M3 9.400h11M3 12h11" />
          </svg>
        </View>
        <View $w={18} $ml={13}>
          <svg width="18" height="16" viewBox="0 0 18 16" fill="none" stroke="#666" strokeWidth="1.200">
            <path d="M14 5V.6H.6v12.800H8M3 3.500h9M3 6.200h7M3 9h4M3 11.300h4" />
            <circle cx="13" cy="11" r="4" fill="#666" />
            <path d="M11 9l2 1.500-1 2.500M14 8l1 1.500 1.500 1" stroke="#eee" />
          </svg>
        </View>
        <View $w={10} $ml={17}>
          <svg width="10" height="10" viewBox="0 0 10 10"><path d="M0 5h10" stroke="#555" strokeWidth="2" /></svg>
        </View>
        <Zoom><ZoomThumb /></Zoom>
        <View $w={10}>
          <svg width="10" height="10" viewBox="0 0 10 10"><path d="M0 5h10M5 0v10" stroke="#555" strokeWidth="2" /></svg>
        </View>
        <Slot $ml={12}><Fit w={31}>100%</Fit></Slot>
      </StatusBar>

      <Taskbar>
        <SysTile>
          <svg width="20" height="20" viewBox="0 0 20 20" fill="#fff">
            <path d="M0 2.800L8.200 1.700v7.800H0zM9.200 1.500L20 0v9.500H9.200zM0 10.500h8.200v7.800L0 17.200zM9.200 10.500H20V20L9.200 18.500z" />
          </svg>
        </SysTile>
        <SysTile><Magnifier s={20} c="#fff" w={1.5} /></SysTile>
        <SysTile>
          <svg width="20" height="20" viewBox="0 0 20 20" fill="none" stroke="#fff" strokeWidth="1.300">
            <path d="M.7 0v3.500h12V0M.7 20v-3.500h12V20M.7 6.500h12v7H.7zM18.500 0v4M18.500 11v8" />
            <path d="M17 6h3v3h-3z" fill="#fff" stroke="none" />
          </svg>
        </SysTile>
        <AppTiles>
          <AppTile $run>
            <svg width="29" height="29" viewBox="0 0 29 29">
              <circle cx="14" cy="14" r="14" fill="#fff" />
              <g strokeWidth="4.200" strokeLinecap="round">
                <path d="M6 11.500h5" stroke="#36c5f0" /><path d="M11 6v.1" stroke="#36c5f0" />
                <path d="M17 6v5" stroke="#2eb67d" /><path d="M22.500 11.500h.1" stroke="#2eb67d" />
                <path d="M17 17h5" stroke="#ecb22e" />
                <path d="M11 17v5M6 17h.1" stroke="#e01e5a" />
              </g>
              <circle cx="21" cy="21" r="8.600" fill="#0c0e15" />
              <circle cx="21" cy="21" r="7.600" fill="#d61f55" />
              <SvgText x="21" y="25.500" fontSize="12.500" fontWeight="700" fill="#fff" textAnchor="middle">1</SvgText>
            </svg>
          </AppTile>
          <AppTile $run>
            <svg width="28" height="24" viewBox="0 0 28 24">
              <path d="M1 1h11l2 3h13v19H1z" fill="#f0c44c" />
              <path d="M1 4h26v18.500H1z" fill="#fbe18f" />
              <path d="M6 23v-9.500h16V23h-4.500v-4.500h-7V23z" fill="#3ea6de" />
            </svg>
          </AppTile>
          <AppTile $run>
            <svg width="28" height="28" viewBox="0 0 28 28">
              <circle cx="14" cy="14" r="14" fill="#f6c433" />
              <path d="M14 14L1.900 7A14 14 0 0 1 26.100 7z" fill="#da4437" />
              <path d="M1.900 7A14 14 0 0 0 12.500 27.900L19 16.500 14 14z" fill="#1b9e57" />
              <path d="M14 7.500h12.300A14 14 0 0 1 12.500 27.900L19.500 17z" fill="#f6c433" />
              <circle cx="14" cy="14" r="6.600" fill="#f3f3f3" />
              <circle cx="14" cy="14" r="5.200" fill="#4586f2" />
            </svg>
          </AppTile>
          <AppTile><SkypeIcon /></AppTile>
          <AppTile $run><OfficeIcon letter="O" dark="#0f6fc5" kind="mail" /></AppTile>
          <AppTile $run>
            <svg width="28" height="28" viewBox="0 0 28 28" fill="none">
              <path d="M24 19a10 10 0 1 1 1.200-5H8" stroke="#4dbdee" strokeWidth="5" />
              <path d="M3 26.500C-3 22 10 5 22 1.500c4-1 5 1 4 3.500" stroke="#f5c22f" strokeWidth="2.200" />
            </svg>
          </AppTile>
          <AppTile $run>
            <svg width="30" height="30" viewBox="0 0 30 30">
              <path d="M3 2l10-2 6 6-4 15L0 13z" fill="#f2345f" />
              <path d="M1 14l8 2 6 12-13-1 2-6z" fill="#f0743e" />
              <path d="M2 28l6-9 12 6-5 4z" fill="#b5569c" />
              <path d="M15 6l5-5 9 6v17l-9 6-9-6z" fill="#2b62e0" />
              <path d="M6 6h17.500v17.500H6z" fill="#111" />
              <SvgText x="7.500" y="16" fontSize="11" fontWeight="700" fill="#fff">IJ</SvgText>
              <path d="M8 20.500h7" stroke="#fff" strokeWidth="1.500" />
            </svg>
          </AppTile>
          <AppTile $run>
            <svg width="28" height="30" viewBox="0 0 28 30">
              <defs>
                <linearGradient id="npp" x1="0" y1="0" x2="0" y2="1">
                  <stop offset=".3" stopColor="#f4f6ee" />
                  <stop offset=".9" stopColor="#5cc321" />
                </linearGradient>
              </defs>
              <path d="M1 1h16l6 6v22H1z" fill="url(#npp)" stroke="#ddd" />
              <SvgText x="5" y="17" fontSize="10" fontWeight="600" fill="#222">n++</SvgText>
              <path d="M27 1L17 22l-1.500 3" stroke="#e79b2b" strokeWidth="3" fill="none" />
            </svg>
          </AppTile>
          <AppTile $run><OfficeIcon letter="X" dark="#1e7145" kind="grid" /></AppTile>
          <AppTile $run><SkypeIcon badge /></AppTile>
          <AppTile $run $active><OfficeIcon letter="W" dark="#2a5699" kind="lines" /></AppTile>
        </AppTiles>
        <Tray>
          <svg width="20" height="20" viewBox="0 0 20 20" fill="none" stroke="#fff" strokeWidth="1.600">
            <path d="M4.500 13l5.500-5.500 5.500 5.500" />
          </svg>
          <Slot $w={20} $ml={20}>
            <svg width="20" height="14" viewBox="0 0 20 14" fill="none" stroke="#fff" strokeWidth="1.200">
              <path d="M9 3h9v9.500H5V9M18.500 6h1v3.500h-1M1.500 0v3M5 0v3M.5 3h5.500v2.500c0 3-5.500 3-5.500 0zM3 8v4" />
              <path d="M7 6h3v5H7z" fill="#fff" stroke="none" />
            </svg>
          </Slot>
          <Slot $w={20} $ml={20}>
            <svg width="20" height="17" viewBox="0 0 20 17" fill="none" stroke="#fff" strokeWidth="1.200">
              <path d="M6 1.600h13.400v10.800H4V7M11.500 12.500v3M7 16h9M.6.600h4.800v4.800H.600zM3 5.500V9" />
            </svg>
          </Slot>
          <Slot $w={21} $ml={19}>
            <svg width="21" height="18" viewBox="0 0 21 18" fill="none" stroke="#fff" strokeWidth="1.200">
              <path d="M.6 6.500h3L8 2.500v13l-4.400-4h-3zM11 6.500c1.200 1.500 1.200 3.500 0 5M14 4c2.500 3 2.500 7 0 10M17 1.500c4 4.500 4 10.500 0 15" />
            </svg>
          </Slot>
          <Clock>
            <Fit w={53}>9:05 AM</Fit>
            <Fit w={75}>10/24/2019</Fit>
          </Clock>
          <svg width="20" height="20" viewBox="0 0 20 20" fill="none" stroke="#fff" strokeWidth="1.300">
            <path d="M.7 1h18.600v14.500h-6L10 19l-3.300-3.500h-6z" />
          </svg>
          <DesktopEdge />
        </Tray>
      </Taskbar>

      <TextCursor>
        <svg width="10" height="18" viewBox="0 0 10 18" fill="none" stroke="#222" strokeWidth="1">
          <path d="M1.500.5h2.500l1 1 1-1h2.500M5 1.500v15M1.500 17.500h2.500l1-1 1 1h2.500" />
        </svg>
      </TextCursor>
      <RecordDot />
      <SpeakerCard>
        <RoundBtn>
          <svg width="8" height="12" viewBox="0 0 8 12" fill="none" stroke="#333" strokeWidth="1.600">
            <path d="M1.500 1l5 5-5 5" />
          </svg>
        </RoundBtn>
        <Fit w={184}>Speaking: Antony Sudharsan Gna...</Fit>
      </SpeakerCard>
      <Ball>
        <svg width="52" height="52" viewBox="0 0 52 52">
          <g opacity=".54">
            <circle cx="26" cy="26" r="26" fill="#00607c" />
            <circle cx="26" cy="26" r="16.500" fill="#a9a5a8" />
            <path d="M42.500 24A16.500 16.500 0 0 1 14 37C28 37 37 29 40.500 17.500A16 16 0 0 1 42.500 24z" fill="#5c9a35" />
            <circle cx="41" cy="10" r="4.500" fill="#2c4756" />
            <circle cx="11" cy="41" r="4.500" fill="#003448" />
          </g>
        </svg>
      </Ball>
      <Frame />
    </Screen>
  );
}
